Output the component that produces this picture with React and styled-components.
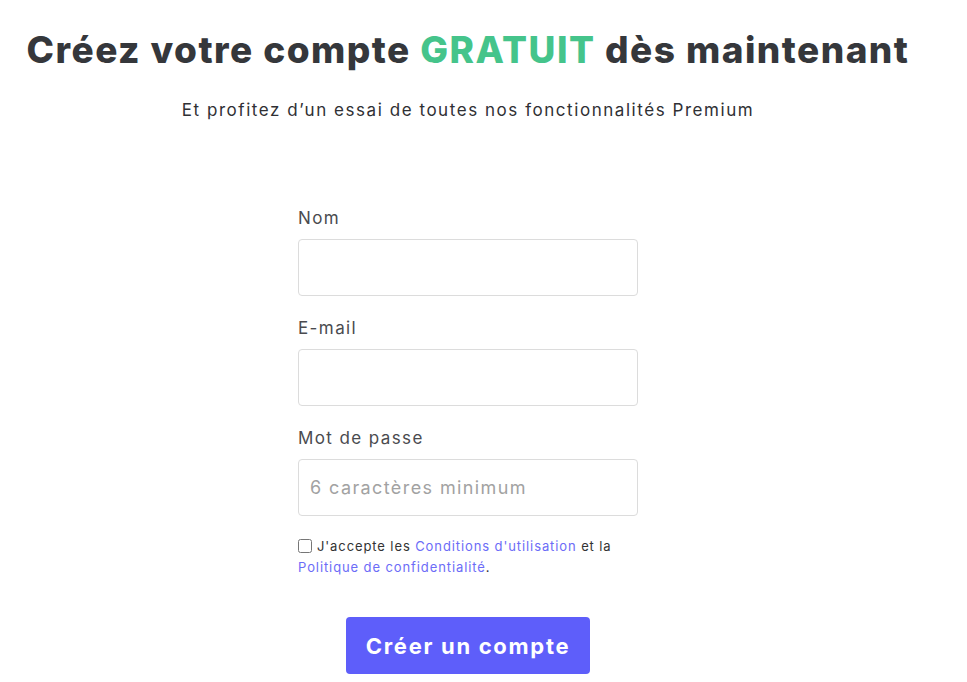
import React from "react";
import styled, { createGlobalStyle } from "styled-components";

const textDark = "#35373b";
const green = "#45c48b";
const violet = "#5e5efa";
const link = "#6c6cf7";

const GlobalStyle = createGlobalStyle`
  body {
    margin: 0;
    background: #ffffff;
    font-family: "Inter", "Noto Sans", sans-serif;
    color: ${textDark};
  }
`;

const Page = styled.div`
  width: 936px;
  display: flex;
  flex-direction: column;
  align-items: center;
  padding-top: 24px;
`;

const Title = styled.h1`
  margin: 0;
  font-size: 37px;
  font-weight: 800;
  line-height: 52px;
  letter-spacing: 1.45px;
  color: ${textDark};
  white-space: nowrap;
`;

const Highlight = styled.span`
  color: ${green};
`;

const Subtitle = styled.p`
  margin: 22px 0 0;
  font-size: 17px;
  line-height: 24px;
  letter-spacing: 1.55px;
  color: #2f3034;
  white-space: nowrap;
`;

const Form = styled.form`
  width: 340px;
  margin-top: 84px;
  display: flex;
  flex-direction: column;
`;

const Field = styled.div`
  display: flex;
  flex-direction: column;
  margin-bottom: 20px;
`;

const Label = styled.label`
  font-size: 17px;
  line-height: 24px;
  letter-spacing: 1.4px;
  color: #4a4b4f;
  margin-bottom: 9px;
`;

const Input = styled.input`
  box-sizing: border-box;
  width: 100%;
  height: 57px;
  border: 1px solid #dcdcdc;
  border-radius: 4px;
  padding: 0 11px;
  font-family: inherit;
  font-size: 18px;
  letter-spacing: 1.4px;
  color: ${textDark};
  outline: none;

  &::placeholder {
    color: #a2a2a2;
  }
`;

const Terms = styled.div`
  margin-top: 0;
  font-size: 13px;
  line-height: 21px;
  letter-spacing: 0.9px;
  color: #333;
`;

const Check = styled.input`
  width: 14px;
  height: 14px;
  margin: 0 5px 0 0;
  vertical-align: -2px;
`;

const Link = styled.a`
  color: ${link};
  text-decoration: none;
`;

const Submit = styled.button`
  align-self: center;
  margin-top: 39px;
  width: 244px;
  height: 57px;
  border: none;
  border-radius: 4px;
  background: ${violet};
  color: #ffffff;
  font-family: inherit;
  font-size: 22px;
  font-weight: 700;
  letter-spacing: 1.7px;
  cursor: pointer;
`;

const App = () => {
  return (
    <Page>
      <GlobalStyle />
      <Title>
        Créez votre compte <Highlight>GRATUIT</Highlight> dès maintenant
      </Title>
      <Subtitle>Et profitez d’un essai de toutes nos fonctionnalités Premium</Subtitle>
      <Form onSubmit={(e) => e.preventDefault()}>
        <Field>
          <Label htmlFor="nom">Nom</Label>
          <Input id="nom" type="text" />
        </Field>
        <Field>
          <Label htmlFor="email">E-mail</Label>
          <Input id="email" type="email" />
        </Field>
        <Field>
          <Label htmlFor="password">Mot de passe</Label>
          <Input id="password" type="password" placeholder="6 caractères minimum" />
        </Field>
        <Terms>
          <Check type="checkbox" />
          J'accepte les <Link href="#">Conditions d'utilisation</Link> et la
          <br />
          <Link href="#">Politique de confidentialité</Link>.
        </Terms>
        <Submit type="submit">Créer un compte</Submit>
      </Form>
    </Page>
  );
};

export default App;
